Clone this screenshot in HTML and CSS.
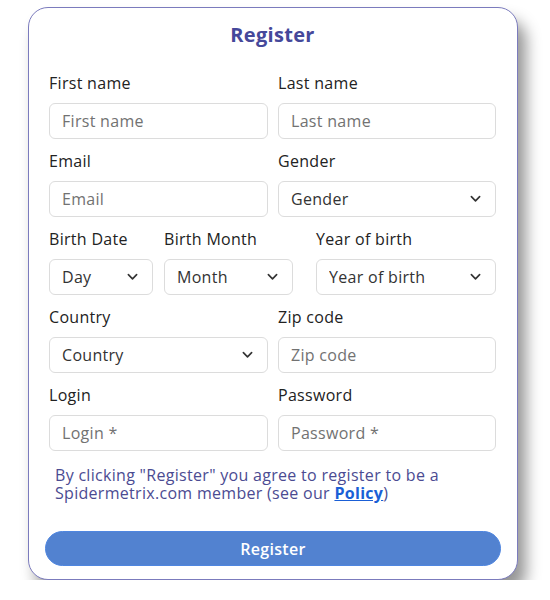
FILE: index.html
```html
<!DOCTYPE html>
<html lang="en">
<head>
<meta charset="utf-8">
<title>Register</title>
<link rel="stylesheet" href="styles.css">
</head>
<body>
<form class="card">
  <h1 class="title">Register</h1>
  <div class="row two">
    <div class="field">
      <label>First name</label>
      <input type="text" placeholder="First name">
    </div>
    <div class="field">
      <label>Last name</label>
      <input type="text" placeholder="Last name">
    </div>
  </div>
  <div class="row two">
    <div class="field">
      <label>Email</label>
      <input type="text" placeholder="Email">
    </div>
    <div class="field">
      <label>Gender</label>
      <div class="select"><select><option>Gender</option></select><svg class="chev" viewBox="0 0 12 8"><path d="M1.5 1.5 6 6 10.5 1.5"/></svg></div>
    </div>
  </div>
  <div class="row three">
    <div class="field">
      <label>Birth Date</label>
      <div class="select"><select><option>Day</option></select><svg class="chev" viewBox="0 0 12 8"><path d="M1.5 1.5 6 6 10.5 1.5"/></svg></div>
    </div>
    <div class="field">
      <label>Birth Month</label>
      <div class="select"><select><option>Month</option></select><svg class="chev" viewBox="0 0 12 8"><path d="M1.5 1.5 6 6 10.5 1.5"/></svg></div>
    </div>
    <div class="field">
      <label>Year of birth</label>
      <div class="select"><select><option>Year of birth</option></select><svg class="chev" viewBox="0 0 12 8"><path d="M1.5 1.5 6 6 10.5 1.5"/></svg></div>
    </div>
  </div>
  <div class="row two">
    <div class="field">
      <label>Country</label>
      <div class="select"><select><option>Country</option></select><svg class="chev" viewBox="0 0 12 8"><path d="M1.5 1.5 6 6 10.5 1.5"/></svg></div>
    </div>
    <div class="field">
      <label>Zip code</label>
      <input type="text" placeholder="Zip code">
    </div>
  </div>
  <div class="row two">
    <div class="field">
      <label>Login</label>
      <input type="text" placeholder="Login *">
    </div>
    <div class="field">
      <label>Password</label>
      <input type="password" placeholder="Password *">
    </div>
  </div>
  <p class="terms">By clicking "Register" you agree to register to be a Spidermetrix.com member (see our <a href="#">Policy</a>)</p>
  <button type="button" class="btn">Register</button>
</form>
</body>
</html>
```
FILE: styles.css
```css
* { box-sizing: border-box; }
html, body { margin: 0; padding: 0; background: #fff; }
body {
  font-family: "Open Sans", "Liberation Sans", sans-serif;
  color: #222;
  padding: 7px 0 0 28px;
}
.card {
  width: 490px;
  height: 573px;
  border: 1px solid #7b7bbd;
  border-radius: 20px;
  background: #fff;
  padding: 13px 21px 14px 20px;
  box-shadow: 8px 13px 15px rgba(0, 0, 0, 0.42);
}
.title {
  margin: 0 0 22px;
  text-align: center;
  font-size: 20px;
  line-height: 28px;
  font-weight: 700;
  color: #45489a;
  letter-spacing: 0.3px;
}
.row { display: grid; margin-bottom: 10px; }
.row.two { grid-template-columns: 219px 218px; column-gap: 10px; }
.row.three { grid-template-columns: 104px 129px 180px; column-gap: 11px; }
.row.three .field:last-child { margin-left: 12px; width: 180px; }
.field { display: flex; flex-direction: column; }
.field label {
  font-size: 16px;
  line-height: 24px;
  margin-bottom: 8px;
  color: #222;
  letter-spacing: 0.3px;
}
.field input, .field select {
  width: 100%;
  height: 36px;
  border: 1px solid #dcdcdc;
  border-radius: 6px;
  padding: 0 12px;
  font: 16px "Open Sans", "Liberation Sans", sans-serif;
  letter-spacing: 0.3px;
  color: #333;
  background: #fff;
  outline: none;
}
.field input::placeholder { color: #727272; }
.select { position: relative; }
.select select { appearance: none; -webkit-appearance: none; }
.chev {
  position: absolute;
  right: 15px;
  top: 14px;
  width: 11px;
  height: 8px;
  fill: none;
  stroke: #333;
  stroke-width: 1.8;
  stroke-linecap: round;
  stroke-linejoin: round;
  pointer-events: none;
}
.terms {
  margin: 15px 0 0 6px;
  font-size: 16px;
  line-height: 18px;
  letter-spacing: 0.3px;
  color: #4b4b92;
}
.terms a { color: #1a5fd6; font-weight: 700; }
.btn {
  display: block;
  width: 456px;
  height: 35px;
  margin: 29px 0 0 -4px;
  border: 1px solid #4f86e0;
  border-radius: 18px;
  background: #5282d0;
  color: #fff;
  font: 600 16px "Open Sans", "Liberation Sans", sans-serif;
  letter-spacing: 0.3px;
}
```
